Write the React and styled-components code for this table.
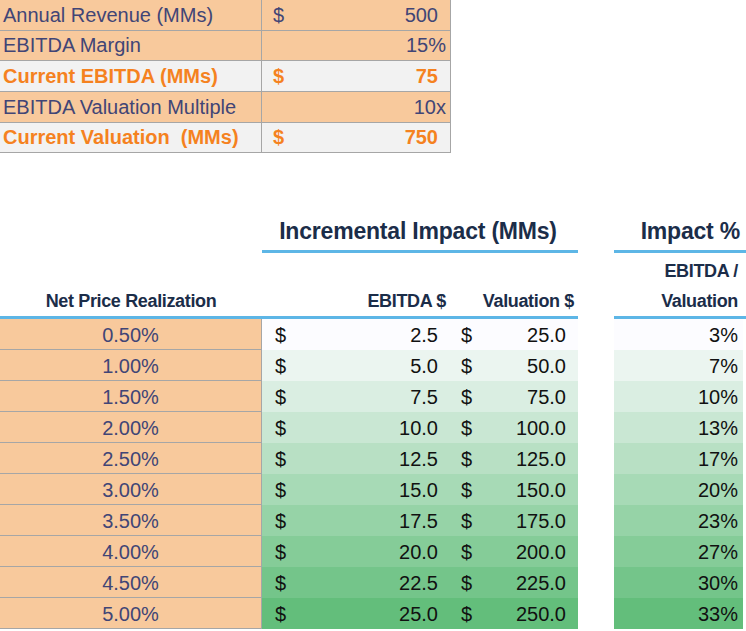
import React from "react";
import styled, { createGlobalStyle } from "styled-components";

const Global = createGlobalStyle`
  html, body { margin: 0; padding: 0; background: #ffffff; }
  body { width: 746px; height: 631px; overflow: hidden; font-family: "Liberation Sans", Arial, sans-serif; }
`;

const GRID_LINE = "#a6a6a6";
const ORANGE_BG = "#f8c99c";
const CALC_BG = "#f2f2f2";
const INPUT_TEXT = "#414576";
const CALC_TEXT = "#f5821f";
const HEAD_TEXT = "#1b2d49";
const BLUE = "#5db6e6";

const Page = styled.div`
  display: flex;
  flex-direction: column;
  width: 746px;
`;

const TopTable = styled.div`
  display: grid;
  grid-template-columns: 262px 189px;
  width: 451px;
`;

const TopCell = styled.div`
  box-sizing: border-box;
  height: ${(p) => p.$h}px;
  border-bottom: 1px solid ${GRID_LINE};
  border-right: 1px solid ${GRID_LINE};
  background: ${(p) => (p.$calc ? CALC_BG : ORANGE_BG)};
  color: ${(p) => (p.$calc ? CALC_TEXT : INPUT_TEXT)};
  font-weight: ${(p) => (p.$calc ? 700 : 400)};
  font-size: 20px;
  line-height: ${(p) => p.$h - 1}px;
  white-space: pre;
`;

const TopLabel = styled(TopCell)`
  padding-left: 3px;
`;

const TopValue = styled(TopCell)`
  display: flex;
  justify-content: space-between;
  padding-left: 11px;
  padding-right: ${(p) => (p.$accounting ? 12 : 4)}px;
`;

const Sheet = styled.div`
  display: grid;
  grid-template-columns: 262px 189px 127px 36px 129px 3px;
  margin-top: 67px;
  font-family: "Liberation Sans", Arial, sans-serif;
`;

const Title = styled.div`
  grid-column: ${(p) => p.$col};
  box-sizing: border-box;
  height: 33px;
  border-bottom: 3px solid ${BLUE};
  display: flex;
  align-items: flex-end;
  justify-content: ${(p) => p.$justify};
  padding: 0 ${(p) => p.$pr || 0}px 8px 0;
  color: ${HEAD_TEXT};
  font-weight: 700;
  font-size: 23px;
  line-height: 22px;
  letter-spacing: -0.2px;
`;

const TitleSpacer = styled.div`
  grid-column: ${(p) => p.$col};
`;

const SubHead = styled.div`
  grid-column: ${(p) => p.$col};
  box-sizing: border-box;
  height: 66px;
  border-bottom: 3px solid ${BLUE};
  display: flex;
  flex-direction: column;
  justify-content: flex-end;
  align-items: ${(p) => p.$align};
  padding: 0 ${(p) => p.$pr || 0}px 0 0;
  color: ${HEAD_TEXT};
  font-weight: 700;
  font-size: 18px;
  line-height: 30px;
  letter-spacing: -0.35px;
`;

const Gap = styled.div`
  grid-column: ${(p) => p.$col};
`;

const RateCell = styled.div`
  grid-column: 1;
  box-sizing: border-box;
  height: 31px;
  background: ${ORANGE_BG};
  border-bottom: 1px solid ${GRID_LINE};
  border-right: 1px solid ${GRID_LINE};
  color: ${INPUT_TEXT};
  font-size: 20px;
  line-height: 30px;
  padding-top: 1px;
  text-align: center;
`;

const MoneyCell = styled.div`
  grid-column: ${(p) => p.$col};
  height: 31px;
  display: flex;
  justify-content: space-between;
  align-items: center;
  padding: 1px ${(p) => p.$pr}px 0 ${(p) => p.$pl}px;
  box-sizing: border-box;
  color: #111111;
  font-size: 20px;
`;

const PctCell = styled.div`
  grid-column: 5;
  height: 31px;
  display: flex;
  justify-content: flex-end;
  align-items: center;
  padding: 1px 5px 0 0;
  box-sizing: border-box;
  color: #111111;
  font-size: 20px;
`;

const topRows = [
  { label: "Annual Revenue (MMs)", dollar: true, value: "500", calc: false, h: 31 },
  { label: "EBITDA Margin", dollar: false, value: "15%", calc: false, h: 30 },
  { label: "Current EBITDA (MMs)", dollar: true, value: "75", calc: true, h: 31 },
  { label: "EBITDA Valuation Multiple", dollar: false, value: "10x", calc: false, h: 31 },
  { label: "Current Valuation  (MMs)", dollar: true, value: "750", calc: true, h: 30 },
];

const rates = [0.5, 1, 1.5, 2, 2.5, 3, 3.5, 4, 4.5, 5];

function scale(t) {
  const r = Math.round(252 + (99 - 252) * t);
  const g = Math.round(252 + (190 - 252) * t);
  const b = Math.round(255 + (123 - 255) * t);
  return `rgb(${r}, ${g}, ${b})`;
}

export default function App() {
  const revenue = 500;
  const multiple = 10;
  return (
    <Page>
      <Global />
      <TopTable>
        {topRows.map((r) => (
          <React.Fragment key={r.label}>
            <TopLabel $calc={r.calc} $h={r.h}>{r.label}</TopLabel>
            <TopValue $calc={r.calc} $h={r.h} $accounting={r.dollar}>
              <span>{r.dollar ? "$" : ""}</span>
              <span>{r.value}</span>
            </TopValue>
          </React.Fragment>
        ))}
      </TopTable>

      <Sheet>
        <TitleSpacer $col="1" />
        <Title $col="2 / 4" $justify="center" $pr={4}>Incremental Impact (MMs)</Title>
        <TitleSpacer $col="4" />
        <Title $col="5 / 7" $justify="flex-end" $pr={6}>Impact %</Title>

        <SubHead $col="1" $align="center">Net Price Realization</SubHead>
        <SubHead $col="2" $align="flex-end" $pr={5}>EBITDA $</SubHead>
        <SubHead $col="3" $align="flex-end" $pr={4}>Valuation $</SubHead>
        <Gap $col="4" />
        <SubHead $col="5 / 7" $align="flex-end" $pr={8}>
          <span>EBITDA /</span>
          <span>Valuation</span>
        </SubHead>

        {rates.map((rate, i) => {
          const ebitda = (revenue * rate) / 100;
          const valuation = ebitda * multiple;
          const pct = Math.round((valuation / 750) * 100);
          const bg = scale(i / 9);
          return (
            <React.Fragment key={rate}>
              <RateCell>{rate.toFixed(2)}%</RateCell>
              <MoneyCell $col="2" $pl={13} $pr={13} style={{ background: bg }}>
                <span>$</span>
                <span>{ebitda.toFixed(1)}</span>
              </MoneyCell>
              <MoneyCell $col="3" $pl={10} $pr={12} style={{ background: bg }}>
                <span>$</span>
                <span>{valuation.toFixed(1)}</span>
              </MoneyCell>
              <Gap $col="4" />
              <PctCell style={{ background: bg }}>{pct}%</PctCell>
              <Gap $col="6" />
            </React.Fragment>
          );
        })}
      </Sheet>
    </Page>
  );
}
